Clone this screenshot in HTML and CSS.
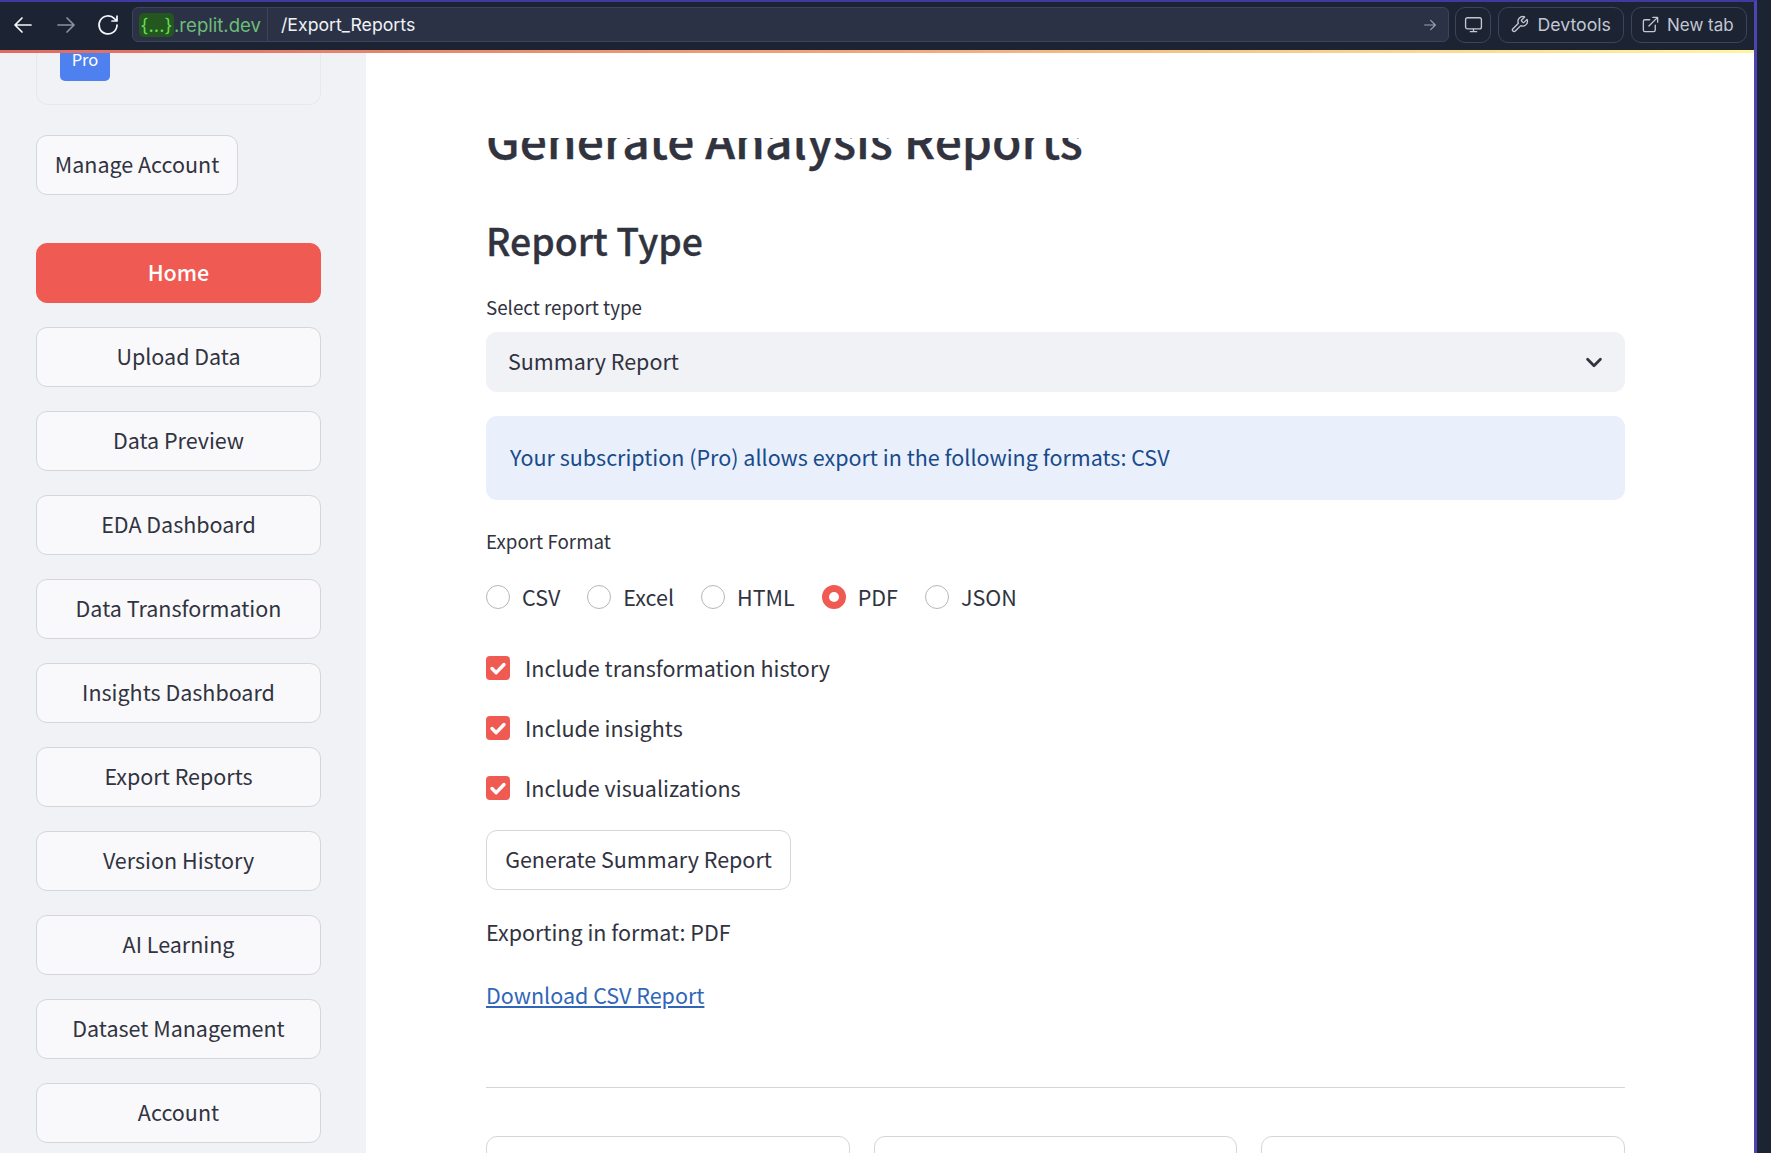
FILE: index.html
```html
<!DOCTYPE html>
<html lang="en">
<head>
<meta charset="utf-8">
<title>Export Reports</title>
<link rel="stylesheet" href="styles.css">
</head>
<body>
<div class="frame">
  <div class="window">
    <header class="topbar">
      <div class="nav">
        <svg class="ic nav-ic" viewBox="0 0 24 24"><path d="M20 12H4M11 5l-7 7 7 7"/></svg>
        <svg class="ic nav-ic dim" viewBox="0 0 24 24"><path d="M4 12h16M13 5l7 7-7 7"/></svg>
        <svg class="ic nav-ic" viewBox="0 0 24 24"><path d="M21 12a9 9 0 1 1-2.6-6.4L21 8M21 3v5h-5"/></svg>
      </div>
      <div class="url">
        <div class="host"><span class="hash">{...}</span>.replit.dev</div>
        <div class="path">/Export_Reports</div>
        <svg class="ic go" viewBox="0 0 24 24"><path d="M4 12h16M13 5l7 7-7 7"/></svg>
      </div>
      <button class="tb-btn icon-only"><svg class="ic tb-ic" viewBox="0 0 24 24"><rect x="2" y="3.500" width="20" height="14" rx="2.500"/><path d="M12 17.500v3.500M8 21h8"/></svg></button>
      <button class="tb-btn devtools"><svg class="ic tb-ic" viewBox="0 0 24 24"><path d="M14.700 6.300a1 1 0 0 0 0 1.400l1.600 1.600a1 1 0 0 0 1.400 0l3.800-3.800a6 6 0 0 1-7.900 7.900l-6.900 6.900a2.100 2.100 0 0 1-3-3l6.900-6.900a6 6 0 0 1 7.900-7.900z"/></svg>Devtools</button>
      <button class="tb-btn newtab"><svg class="ic tb-ic" viewBox="0 0 24 24"><path d="M18 13v6a2 2 0 0 1-2 2H5a2 2 0 0 1-2-2V8a2 2 0 0 1 2-2h6M15 3h6v6M10 14L21 3"/></svg>New tab</button>
    </header>
    <div class="rainbow"></div>
    <div class="app">
      <aside class="sidebar">
        <div class="plan-card"><span class="badge">Pro</span></div>
        <button class="btn manage">Manage Account</button>
        <nav class="menu">
          <button class="btn side primary">Home</button>
          <button class="btn side">Upload Data</button>
          <button class="btn side">Data Preview</button>
          <button class="btn side">EDA Dashboard</button>
          <button class="btn side">Data Transformation</button>
          <button class="btn side">Insights Dashboard</button>
          <button class="btn side">Export Reports</button>
          <button class="btn side">Version History</button>
          <button class="btn side">AI Learning</button>
          <button class="btn side">Dataset Management</button>
          <button class="btn side">Account</button>
        </nav>
      </aside>
      <main class="main">
        <div class="title-clip"><h1>Generate Analysis Reports</h1></div>
        <h2>Report Type</h2>
        <label class="field-label">Select report type</label>
        <div class="select">
          <span>Summary Report</span>
          <svg class="chev" viewBox="0 0 24 24"><path d="M5 9l7 7 7-7"/></svg>
        </div>
        <div class="info">Your subscription (Pro) allows export in the following formats: CSV</div>
        <label class="field-label export-label">Export Format</label>
        <div class="radios">
          <div class="radio"><i class="dot"></i>CSV</div>
          <div class="radio"><i class="dot"></i>Excel</div>
          <div class="radio"><i class="dot"></i>HTML</div>
          <div class="radio"><i class="dot on"></i>PDF</div>
          <div class="radio"><i class="dot"></i>JSON</div>
        </div>
        <div class="checks">
          <div class="check"><svg class="box" viewBox="0 0 24 24"><rect width="24" height="24" rx="4"/><path d="M6 12.500l4.200 4.200L18 8.500"/></svg>Include transformation history</div>
          <div class="check"><svg class="box" viewBox="0 0 24 24"><rect width="24" height="24" rx="4"/><path d="M6 12.500l4.200 4.200L18 8.500"/></svg>Include insights</div>
          <div class="check"><svg class="box" viewBox="0 0 24 24"><rect width="24" height="24" rx="4"/><path d="M6 12.500l4.200 4.200L18 8.500"/></svg>Include visualizations</div>
        </div>
        <button class="btn gen">Generate Summary Report</button>
        <p class="fmt">Exporting in format: PDF</p>
        <a class="dl" href="#">Download CSV Report</a>
        <hr class="rule">
        <div class="cards"><div class="card"></div><div class="card"></div><div class="card"></div></div>
      </main>
    </div>
  </div>
</div>
</body>
</html>
```
FILE: styles.css
```css
* { box-sizing: border-box; }
html, body { margin: 0; height: 100%; overflow: hidden; }
body { background: #1c2333; font-family: "Noto Sans CJK SC", "Source Sans Pro", sans-serif; color: #31333f; }
.frame { width: 1771px; height: 1153px; background: #1c2333; }
.window { width: 1757px; height: 1153px; display: flex; flex-direction: column; border-top: 2px solid #3f3aa0; border-right: 3px solid #4a45b0; }
.topbar { height: 48px; flex: none; display: flex; align-items: center; background: #1c2333; padding: 0 7px 3px 11px; font-family: Inter, sans-serif; }
.ic { fill: none; stroke: currentColor; stroke-width: 1.7; stroke-linecap: round; stroke-linejoin: round; flex: none; }
.nav { display: flex; align-items: center; gap: 18.500px; width: 121px; flex: none; color: #f5f9fc; }
.nav-ic { width: 24px; height: 24px; }
.nav-ic.dim { color: #8a92a0; }
.url { flex: 1; height: 35px; display: flex; align-items: center; background: #2b3245; border: 1px solid #3c445c; border-radius: 6px; font-size: 17.700px; min-width: 0; }
.host { height: 100%; width: 135px; display: flex; align-items: center; color: #6bbf76; font-size: 18.600px; padding-left: 6px; border-right: 1px solid #3c445c; white-space: nowrap; }
.hash { width: 35px; height: 24px; display: flex; align-items: center; justify-content: center; background: #24571f; color: #66dd55; border-radius: 5px; flex: none; }
.path { color: #f0f3f7; padding-left: 13px; flex: 1; }
.go { width: 16px; height: 16px; color: #9aa3b2; margin-right: 10px; }
.tb-btn { height: 36px; background: transparent; border: 1px solid #3c445c; border-radius: 10px; color: #c2c8d2; display: flex; align-items: center; font: 17px Inter, sans-serif; margin-left: 7px; padding: 0; }
.tb-ic { width: 19px; height: 19px; }
.icon-only { width: 36px; margin-left: 6px; justify-content: center; }
.devtools { width: 126px; gap: 8.500px; padding-left: 11px; font-size: 17.700px; }
.newtab { width: 116px; gap: 7px; padding-left: 9px; }
.rainbow { height: 3px; flex: none; background: linear-gradient(90deg, #e06a5f 0%, #efa77c 50%, #fff5a0 100%); }
.app { flex: 1; display: flex; min-height: 0; background: #fff; }
.sidebar { width: 366px; flex: none; background: #f0f2f6; padding: 0 45px 0 36px; overflow: hidden; }
.plan-card { height: 52px; border: 1px solid #e6e8ee; border-top: 0; border-radius: 0 0 12px 12px; padding-left: 23px; }
.badge { display: block; width: 50px; height: 28px; background: #4f80f0; color: #fff; border-radius: 0 0 5px 5px; font-size: 16.500px; line-height: 13px; text-align: center; overflow: visible; }
.btn { display: block; height: 60px; background: #fff; border: 1px solid #d5d6da; border-radius: 11px; color: #31333f; font-family: inherit; font-size: 21.500px; padding: 0 0 3px; white-space: nowrap; }
.manage { margin-top: 30px; width: 202px; background: #f9f9fb; }
.menu { display: flex; flex-direction: column; gap: 24px; margin-top: 48px; }
.side { width: 285px; background: #f9f9fb; }
.primary { background: #ef5b53; border-color: #ef5b53; color: #fff; font-weight: 500; }
.main { flex: 1; padding: 0 129px 0 120px; overflow: hidden; min-width: 0; }
.title-clip { margin-top: 85px; height: 36px; overflow: hidden; }
h1 { margin: -30px 0 0; font-size: 48px; line-height: 60px; font-weight: 500; -webkit-text-stroke: 0.3px #31333f; white-space: nowrap; }
h2 { margin: 40px 0 0; font-size: 37.400px; line-height: 52px; font-weight: 500; -webkit-text-stroke: 0.3px #31333f; }
.field-label { display: block; font-size: 18.800px; line-height: 28px; margin-top: 27px; }
.select { margin-top: 11px; height: 60px; background: #f0f2f6; border-radius: 11px; display: flex; align-items: center; justify-content: space-between; padding: 0 20px 3px 22px; font-size: 21.500px; }
.chev { width: 22px; height: 22px; fill: none; stroke: #31333f; stroke-width: 3; stroke-linecap: round; stroke-linejoin: round; margin-top: 3px; }
.info { margin-top: 24px; height: 84px; background: #e9f0fb; border-radius: 11px; color: #184a8c; font-size: 21.500px; display: flex; align-items: center; padding: 0 24px 3px; }
.export-label { margin-top: 27px; }
.radios { display: flex; gap: 27px; margin-top: 25px; height: 32px; align-items: center; }
.radio { display: flex; align-items: center; gap: 12px; font-size: 21.500px; }
.dot { width: 24px; height: 24px; border: 1px solid #b5b6bb; border-radius: 50%; background: #fff; flex: none; margin-top: 1px; }
.dot.on { border: 7.500px solid #ef5b53; }
.checks { margin-top: 39px; display: flex; flex-direction: column; gap: 28px; }
.check { display: flex; align-items: center; gap: 15px; height: 32px; font-size: 21.500px; }
.box { width: 24px; height: 24px; flex: none; margin-top: 1px; }
.box rect { fill: #ef5b53; }
.box path { fill: none; stroke: #fff; stroke-width: 3.400; stroke-linecap: round; stroke-linejoin: round; }
.gen { margin-top: 27px; width: 305px; }
.fmt { margin: 25px 0 0; font-size: 21.500px; line-height: 34px; }
.dl { display: block; margin-top: 29px; width: max-content; font-size: 21.500px; line-height: 34px; color: #2f66b8; }
.rule { margin: 75px 0 0; border: 0; border-top: 1px solid #d5d6da; }
.cards { margin-top: 48px; display: grid; grid-template-columns: repeat(3, 1fr); gap: 24px; }
.card { height: 60px; border: 1px solid #d5d6da; border-radius: 11px; background: #fff; }
```
